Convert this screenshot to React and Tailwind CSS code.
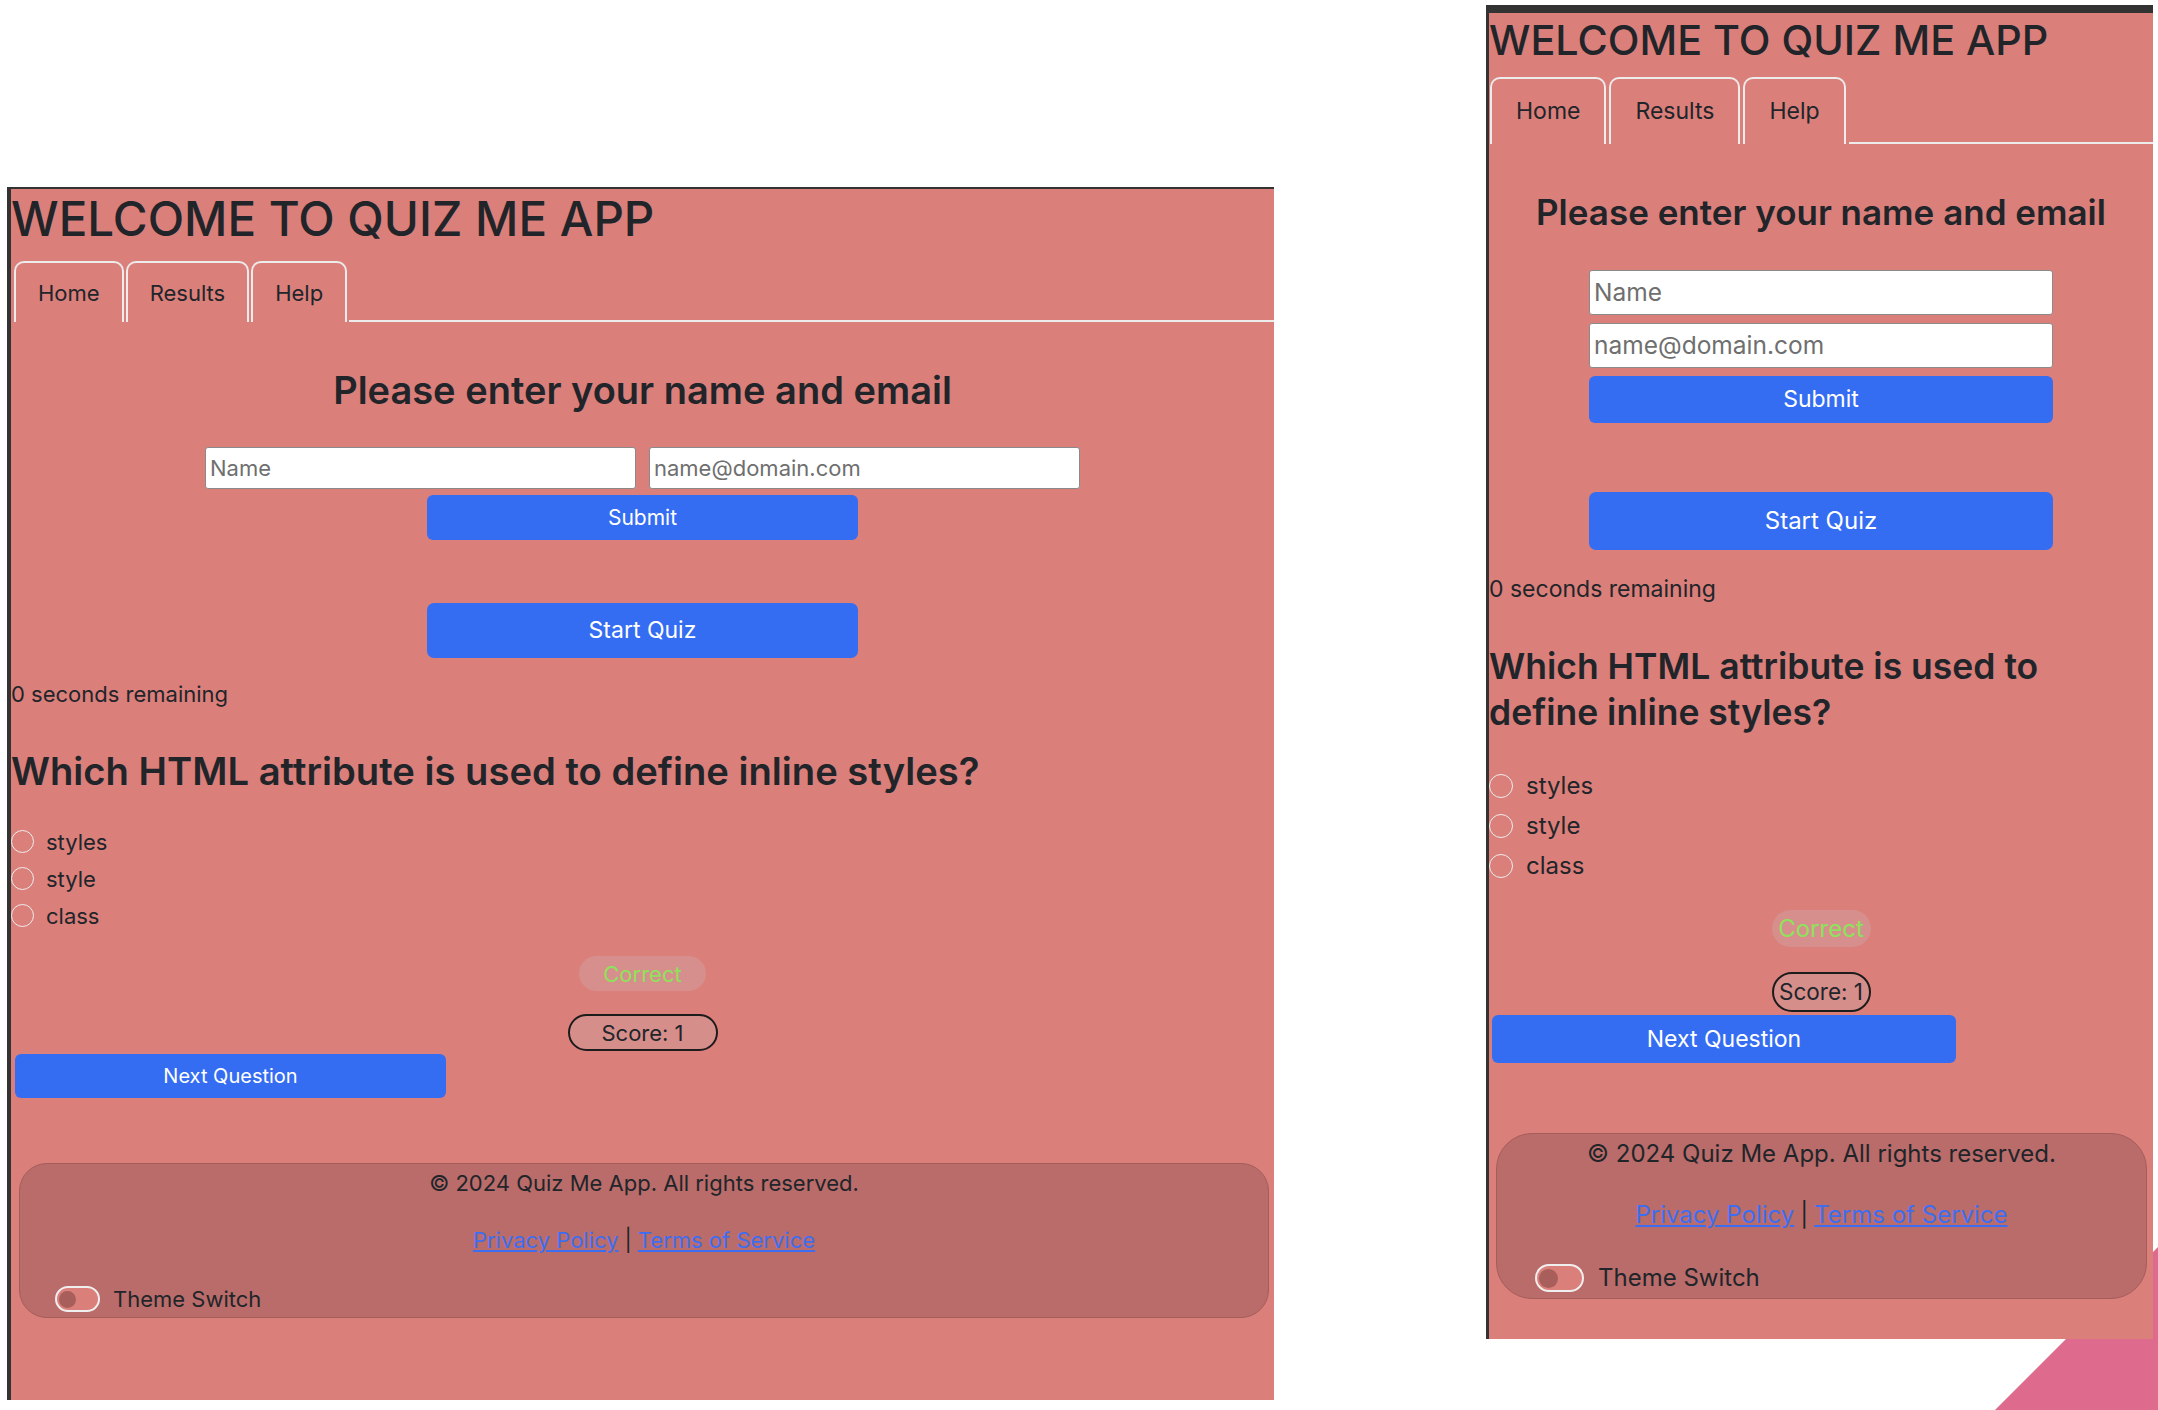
import React from "react";

// two copies of the same quiz screen, captured at different widths
const sizes = {
  lg: {
    panel: "ml-[7px] mt-[187px] w-[1267px] h-[1213px] border-l-4 border-t-2",
    title: "mt-[2px] h-[56px] text-[47.5px]",
    tabs: "mt-[14px] h-[61px] pl-[3px] gap-[2px]",
    tab: "px-[22px] text-[22px]",
    heading: "mt-[44px] h-[48px] text-[38px] justify-center",
    inputs: "mt-[33px] flex-row justify-center gap-[13px]",
    input: "w-[431px] h-[42px] text-[22px]",
    submit: "mt-[6px] w-[431px] h-[45px] text-[21px]",
    start: "mt-[63px] w-[431px] h-[55px] text-[23px]",
    timer: "mt-[21px] h-[30px] text-[22px]",
    question: "mt-[39px] text-[38.2px] leading-[46px]",
    options: "mt-[29px]",
    option: "h-[37px] gap-[12px] text-[22px]",
    radio: "w-[23px] h-[23px]",
    correct: "mt-[22px] w-[127px] h-[35px] text-[22px]",
    score: "mt-[23px] w-[150px] h-[37px] text-[22px]",
    next: "mt-[3px] ml-[4px] w-[431px] h-[44px] text-[20px]",
    footer: "mt-[65px] ml-[8px] mr-[5px] h-[155px] rounded-[28px] pt-[4px]",
    copy: "h-[30px] text-[22px]",
    links: "mt-[27px] h-[30px] text-[22px]",
    switchRow: "mt-[31px] h-[26px] pl-[35px] gap-[13px] text-[22px]",
    toggle: "w-[45px] h-[26px]",
    knob: "w-[17px] h-[17px]",
  },
  sm: {
    panel: "ml-[212px] mt-[5px] w-[667px] h-[1334px] border-l-[3px] border-t-8",
    title: "mt-[3px] h-[49px] text-[41.3px]",
    tabs: "mt-[12px] h-[67px] pl-[1px] gap-[3px]",
    tab: "px-[24px] text-[23px]",
    heading: "mt-[46px] h-[44px] text-[35px] justify-center",
    inputs: "mt-[36px] flex-col items-center gap-[8px]",
    input: "w-[464px] h-[45px] text-[24.5px]",
    submit: "mt-[8px] w-[464px] h-[47px] text-[23px]",
    start: "mt-[69px] w-[464px] h-[58px] text-[24px]",
    timer: "mt-[23px] h-[32px] text-[23px]",
    question: "mt-[39px] text-[35.5px] leading-[46px] max-w-[600px]",
    options: "mt-[30px]",
    option: "h-[40px] gap-[13px] text-[24px]",
    radio: "w-[24px] h-[24px]",
    correct: "mt-[24px] w-[99px] h-[37px] text-[24px]",
    score: "mt-[25px] w-[99px] h-[40px] text-[22.5px]",
    next: "mt-[3px] ml-[3px] w-[464px] h-[48px] text-[23px]",
    footer: "mt-[70px] ml-[7px] mr-[6px] h-[166px] rounded-[36px] pt-[4px]",
    copy: "h-[32px] text-[24px]",
    links: "mt-[29px] h-[32px] text-[24px]",
    switchRow: "mt-[33px] h-[28px] pl-[38px] gap-[14px] text-[24px]",
    toggle: "w-[49px] h-[28px]",
    knob: "w-[19px] h-[19px]",
  },
};

function QuizPanel({ size }) {
  const s = sizes[size];
  return (
    <div className={`relative z-10 flex shrink-0 flex-col bg-[#db7f7b] border-[#333] text-[#212529] ${s.panel}`}>
      <h1 className={`flex items-center font-medium leading-none whitespace-nowrap ${s.title}`}>
        WELCOME TO QUIZ ME APP
      </h1>

      <nav className={`flex ${s.tabs}`}>
        {["Home", "Results", "Help"].map((t) => (
          <div
            key={t}
            className={`flex items-center border-2 border-b-0 border-[#ececec] rounded-t-[10px] leading-none ${s.tab}`}
          >
            {t}
          </div>
        ))}
        <div className="flex-1 border-b-2 border-[#ececec]" />
      </nav>

      <h2 className={`flex items-center font-semibold leading-none ${s.heading}`}>
        Please enter your name and email
      </h2>

      <div className={`flex ${s.inputs}`}>
        <div className={`flex items-center bg-white border-[1.5px] border-[#8a8a8a] rounded-[3px] px-[4px] text-[#6f6f6f] ${s.input}`}>
          Name
        </div>
        <div className={`flex items-center bg-white border-[1.5px] border-[#8a8a8a] rounded-[3px] px-[4px] text-[#6f6f6f] ${s.input}`}>
          name@domain.com
        </div>
      </div>
      <button className={`self-center flex items-center justify-center rounded-[6px] bg-[#356df2] text-white ${s.submit}`}>
        Submit
      </button>
      <button className={`self-center flex items-center justify-center rounded-[7px] bg-[#356df2] text-white ${s.start}`}>
        Start Quiz
      </button>

      <div className={`flex items-center leading-none ${s.timer}`}>0 seconds remaining</div>

      <h3 className={`font-semibold ${s.question}`}>Which HTML attribute is used to define inline styles?</h3>

      <div className={`flex flex-col ${s.options}`}>
        {["styles", "style", "class"].map((o) => (
          <label key={o} className={`flex items-center leading-none ${s.option}`}>
            <span className={`rounded-full border-[1.5px] border-[#eeeeee] ${s.radio}`} />
            {o}
          </label>
        ))}
      </div>

      <div className={`self-center flex items-center justify-center rounded-full bg-[#d68f8c] text-[#8ee25b] leading-none ${s.correct}`}>
        Correct
      </div>
      <div className={`self-center flex items-center justify-center rounded-full border-2 border-[#1c1c1c] bg-[#d68e8b] leading-none ${s.score}`}>
        Score: 1
      </div>

      <button className={`flex items-center justify-center rounded-[6px] bg-[#356df2] text-white ${s.next}`}>
        Next Question
      </button>

      <footer className={`flex flex-col border border-[#a55d5b] bg-[#b96c6a] ${s.footer}`}>
        <div className={`flex items-center justify-center leading-none ${s.copy}`}>
          © 2024 Quiz Me App. All rights reserved.
        </div>
        <div className={`flex items-center justify-center gap-[6px] leading-none ${s.links}`}>
          <a className="text-[#3d6ef2] underline">Privacy Policy</a>
          <span>|</span>
          <a className="text-[#3d6ef2] underline">Terms of Service</a>
        </div>
        <div className={`flex items-center leading-none ${s.switchRow}`}>
          <span className={`flex items-center rounded-full border-2 border-[#efefef] bg-[#db7f7b] px-[2px] ${s.toggle}`}>
            <span className={`rounded-full bg-[#a85e5b] ${s.knob}`} />
          </span>
          Theme Switch
        </div>
      </footer>
    </div>
  );
}

export default function App() {
  return (
    <div className="relative w-[2158px] h-[1410px] overflow-hidden bg-white flex items-start font-['Inter',sans-serif]">
      <svg className="absolute right-0 bottom-0 w-[163px] h-[163px]" viewBox="0 0 163 163">
        <polygon points="163,0 163,163 0,163" fill="#de6a8e" />
      </svg>
      <QuizPanel size="lg" />
      <QuizPanel size="sm" />
    </div>
  );
}
